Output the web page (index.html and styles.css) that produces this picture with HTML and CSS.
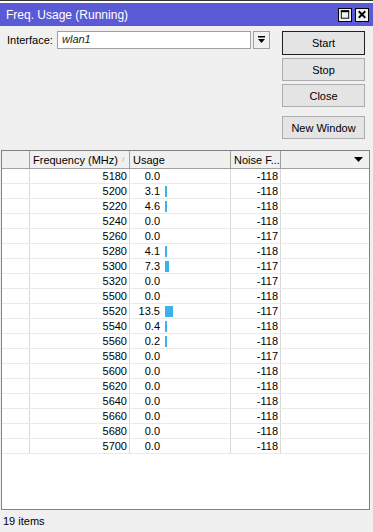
FILE: index.html
```html
<!DOCTYPE html>
<html>
<head>
<meta charset="utf-8">
<link rel="stylesheet" href="styles.css">
</head>
<body>
<div class="win">
  <div class="topstrip"></div>
  <div class="titlebar">
    <span class="title">Freq. Usage (Running)</span>
    <div class="tbtns">
      <span class="tbtn"><svg width="13" height="13" viewBox="0 0 13 13"><rect x="2.5" y="2.5" width="8" height="8" fill="none" stroke="#000" stroke-width="1"/><rect x="2" y="2" width="9" height="2" fill="#000"/></svg></span>
      <span class="tbtn"><svg width="13" height="13" viewBox="0 0 13 13"><path d="M3 3 L10 10 M10 3 L3 10" stroke="#000" stroke-width="2"/></svg></span>
    </div>
  </div>
  <div class="top">
    <div class="iface">
      <span class="lbl">Interface:</span>
      <div class="input">wlan1</div>
      <div class="dd"><svg width="9" height="9" viewBox="0 0 9 9"><rect x="1" y="0" width="7" height="1.5" fill="#000"/><path d="M1 3 H8 L4.5 7 Z" fill="#000"/></svg></div>
    </div>
    <div class="btns">
      <div class="btn def">Start</div>
      <div class="btn">Stop</div>
      <div class="btn">Close</div>
      <div class="btn nw">New Window</div>
    </div>
  </div>
  <div class="table">
    <div class="row head">
      <div class="c c0"></div>
      <div class="c c1">Frequency (MHz) <span class="sort">/</span></div>
      <div class="c c2">Usage</div>
      <div class="c c3">Noise F...</div>
      <div class="c c4"><svg width="9" height="5" viewBox="0 0 9 5"><path d="M0 0 H9 L4.5 5 Z" fill="#000"/></svg></div>
    </div>
    <div class="body" id="body"></div>
  </div>
  <div class="status">19 items</div>
</div>
<script src="app.js"></script>
</body>
</html>
```
FILE: app.js
```js
const data = [
  [5180,"0.0",0,-118],[5200,"3.1",2,-118],[5220,"4.6",2,-118],[5240,"0.0",0,-118],
  [5260,"0.0",0,-117],[5280,"4.1",2,-118],[5300,"7.3",4,-117],[5320,"0.0",0,-117],
  [5500,"0.0",0,-118],[5520,"13.5",8,-117],[5540,"0.4",2,-118],[5560,"0.2",2,-118],
  [5580,"0.0",0,-117],[5600,"0.0",0,-118],[5620,"0.0",0,-118],[5640,"0.0",0,-118],
  [5660,"0.0",0,-118],[5680,"0.0",0,-118],[5700,"0.0",0,-118]
];
const body = document.getElementById('body');
for (const [f,u,w,n] of data) {
  const r = document.createElement('div');
  r.className = 'row';
  r.innerHTML = '<div class="c c0"></div><div class="c c1 num">'+f+'</div>' +
    '<div class="c c2"><span class="uv">'+u+'</span><span class="bar" style="width:'+w+'px"></span></div>' +
    '<div class="c c3 num">'+n+'</div><div class="c c4"></div>';
  body.appendChild(r);
}
```
FILE: styles.css
```css
* { box-sizing: border-box; }
html, body { margin: 0; padding: 0; }
body { width: 373px; height: 532px; overflow: hidden; font-family: "Liberation Sans", Arial, sans-serif; font-size: 11px; color: #000; background: #f0f0f0; }
.win { width: 373px; height: 532px; display: flex; flex-direction: column; background: #f0f0f0; }
.topstrip { height: 3px; background: #fff; border-top: 1px solid #333; }
.titlebar { height: 23px; background: #5a5ad6; display: flex; align-items: center; justify-content: space-between; padding: 0 4px 0 6px; }
.title { color: #fff; font-size: 12px; }
.tbtns { display: flex; gap: 3px; }
.tbtn { width: 14px; height: 14px; background: #f0f0f0; border: 1px solid #000; display: flex; align-items: center; justify-content: center; }
.tbtn svg { display: block; }
.top { display: flex; justify-content: space-between; padding: 5px 8px 0 7px; height: 124px; }
.iface { display: flex; align-items: center; height: 18px; }
.lbl { width: 50px; }
.input { width: 194px; height: 18px; background: #fff; border: 1px solid #a0a0a0; font-style: italic; padding: 1px 4px; color: #222; }
.dd { width: 17px; height: 18px; margin-left: 2px; border: 1px solid #a0a0a0; background: #f0f0f0; display: flex; align-items: center; justify-content: center; }
.btns { display: flex; flex-direction: column; gap: 3px; width: 83px; }
.btn { height: 24px; border: 1px solid #adadad; background: #e4e4e4; display: flex; align-items: center; justify-content: center; }
.btn + .btn { height: 23px; }
.btn.def { border: 1px solid #202020; }
.btn.nw { margin-top: 6px; }
.table { margin: 0 3px 0 1px; flex: 1; background: #fff; border: 1px solid #828282; display: flex; flex-direction: column; overflow: hidden; }
.row { display: flex; height: 15px; border-bottom: 1px solid #eaeaea; }
.row.head { height: 18px; background: #f0f0f0; border-bottom: 1px solid #a0a0a0; }
.c { border-right: 1px solid #d8d8d8; display: flex; align-items: center; white-space: nowrap; overflow: hidden; }
.head .c { border-right: 1px solid #a0a0a0; padding-left: 3px; }
.c0 { width: 28px; }
.c1 { width: 100px; }
.c2 { width: 101px; }
.c3 { width: 50px; }
.c4 { flex: 1; border-right: none; }
.head .c4 { justify-content: flex-end; padding-right: 6px; border-right: none; }
.num { justify-content: flex-end; padding-right: 2px; }
.sort { color: #aaa; font-size: 8px; margin-left: 4px; }
.uv { width: 30px; text-align: right; }
.bar { height: 11px; background: #3ab3ea; margin-left: 5px; }
.status { height: 22px; display: flex; align-items: center; padding-left: 3px; }
```
